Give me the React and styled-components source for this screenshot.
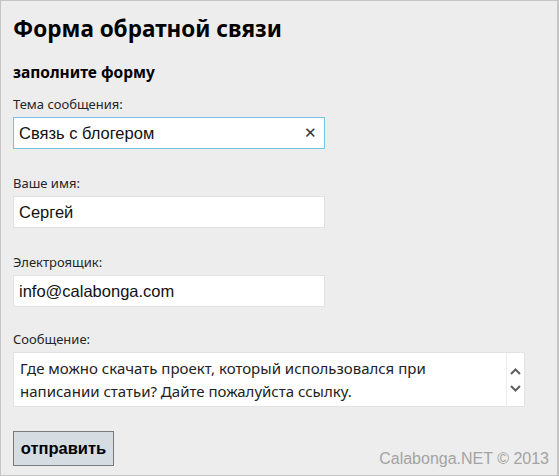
import React from 'react'
import styled, { createGlobalStyle } from 'styled-components'

const Global = createGlobalStyle`
  html, body { margin: 0; padding: 0; background: #ededed; }
  * { box-sizing: border-box; }
`

const Window = styled.div`
  width: 559px;
  height: 476px;
  background: #ededed;
  border: 1px solid #c4c4c4;
  border-right-width: 2px;
  padding: 0 12px;
  font-family: 'Noto Sans', 'Open Sans', sans-serif;
  color: #000;
`

const Title = styled.h1`
  margin: 0;
  padding-top: 12px;
  font-size: 22.5px;
  line-height: 32px;
  font-weight: bold;
`

const Subtitle = styled.h2`
  margin: 0;
  padding-top: 17px;
  font-size: 15.5px;
  line-height: 20px;
  font-weight: bold;
`

const Field = styled.div`
  display: flex;
  flex-direction: column;
  margin-top: ${p => p.gap || 26}px;
`

const Label = styled.label`
  font-size: 13px;
  line-height: 17px;
  color: #262626;
  margin-bottom: 4px;
`

const InputBox = styled.div`
  width: ${p => p.wide ? 512 : 312}px;
  height: ${p => p.tall ? 55 : 32}px;
  background: #fff;
  border: 1px solid ${p => p.focused ? '#78c3e3' : '#e2e2e2'};
  display: flex;
  align-items: center;
  padding: 0 0 0 5px;
  font-family: 'Liberation Sans', Arial, sans-serif;
  font-size: 16.5px;
  color: #111;
`

const Value = styled.span`
  flex: 1;
`

const Clear = styled.span`
  width: 28px;
  text-align: center;
  font-size: 15px;
  color: #333;
`

const AreaText = styled.div`
  flex: 1;
  align-self: stretch;
  padding: 4px 0 0 1px;
  font-family: 'Noto Sans', 'Open Sans', sans-serif;
  font-size: 15px;
  line-height: 23px;
  color: #222;
`

const Scroller = styled.div`
  width: 18px;
  align-self: stretch;
  border-left: 1px solid #ececec;
  display: flex;
  flex-direction: column;
  justify-content: center;
  align-items: center;
  gap: 10px;
`

const Footer = styled.div`
  display: flex;
  justify-content: space-between;
  align-items: flex-end;
  margin-top: 24px;
`

const Button = styled.button`
  width: 101px;
  height: 35px;
  background: #d5dde3;
  border: 1px solid #7a7a7a;
  border-radius: 0;
  font-family: 'Liberation Sans', Arial, sans-serif;
  font-weight: bold;
  font-size: 16.5px;
  color: #000;
  padding: 0;
`

const Copy = styled.span`
  font-family: 'Liberation Sans', Arial, sans-serif;
  font-size: 16px;
  color: #a3a3a3;
  margin-right: -4px;
  margin-bottom: -2px;
`

const Chevron = ({ up }) => (
  <svg width="11" height="7" viewBox="0 0 11 7">
    <path d={up ? 'M1 6 L5.5 1.5 L10 6' : 'M1 1 L5.5 5.5 L10 1'} fill="none" stroke="#606060" strokeWidth="2" />
  </svg>
)

export default function App () {
  return (
    <>
      <Global />
      <Window>
        <Title>Форма обратной связи</Title>
        <Subtitle>заполните форму</Subtitle>
        <Field gap={14}>
          <Label>Тема сообщения:</Label>
          <InputBox focused>
            <Value>Связь с блогером</Value>
            <Clear>✕</Clear>
          </InputBox>
        </Field>
        <Field>
          <Label>Ваше имя:</Label>
          <InputBox><Value>Сергей</Value></InputBox>
        </Field>
        <Field>
          <Label>Электроящик:</Label>
          <InputBox><Value>info@calabonga.com</Value></InputBox>
        </Field>
        <Field gap={24}>
          <Label>Сообщение:</Label>
          <InputBox wide tall>
            <AreaText>Где можно скачать проект, который использовался при написании статьи? Дайте пожалуйста ссылку.</AreaText>
            <Scroller><Chevron up /><Chevron /></Scroller>
          </InputBox>
        </Field>
        <Footer>
          <Button>отправить</Button>
          <Copy>Calabonga.NET © 2013</Copy>
        </Footer>
      </Window>
    </>
  )
}
